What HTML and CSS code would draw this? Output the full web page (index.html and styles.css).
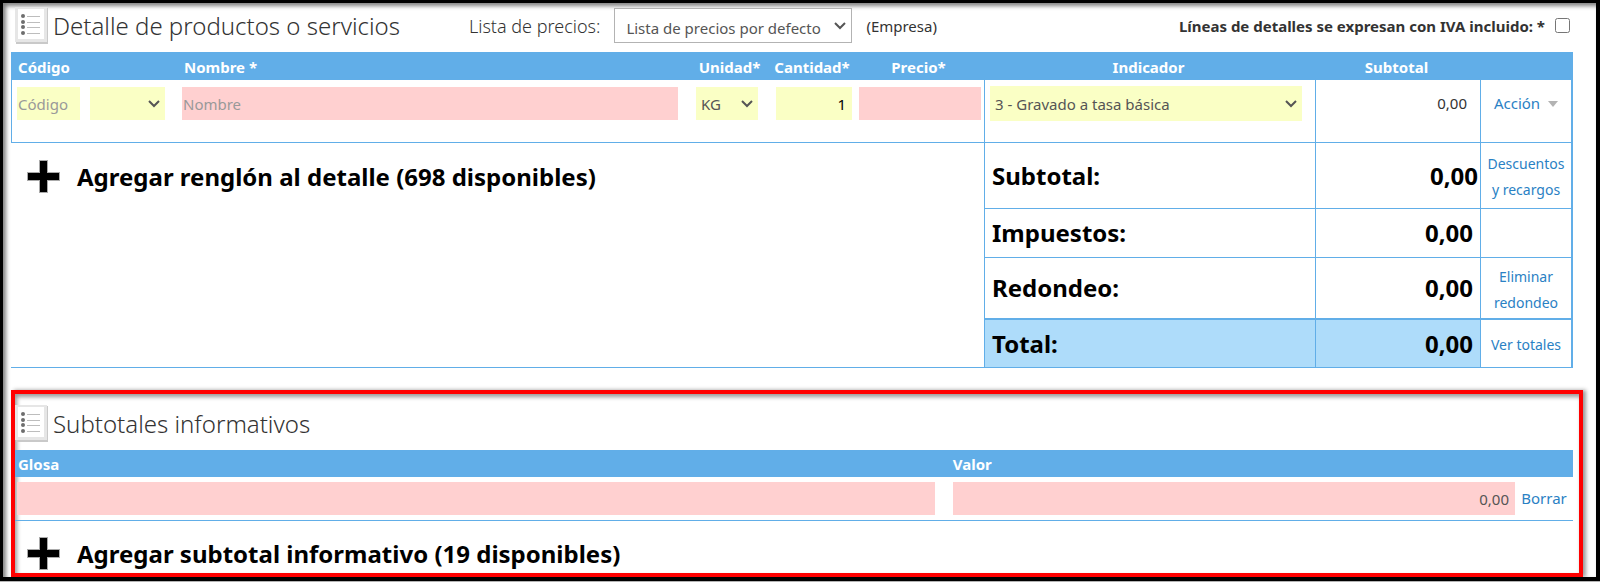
FILE: index.html
```html
<!DOCTYPE html>
<html lang="es">
<head>
    <meta charset="UTF-8">
    <meta name="viewport" content="width=device-width, initial-scale=1.0">
    <title>Detalle de productos o servicios</title>
    <link rel="stylesheet" href="styles.css">
</head>
<body>
    <svg class="sprite" aria-hidden="true">
        <symbol id="icon-list" viewBox="0 0 34 37">
            <rect x="1" y="1" width="32" height="36" fill="#c9c9c9"/>
            <rect x="0" y="0" width="32" height="35" fill="#e6e6e6"/>
            <rect x="3" y="2" width="26" height="30" fill="#fff"/>
            <g fill="#6e6e6e">
                <circle cx="8" cy="9" r="2"/>
                <circle cx="8" cy="15" r="2"/>
                <circle cx="8" cy="20" r="2"/>
                <circle cx="8" cy="26" r="2"/>
            </g>
            <path d="M12 9.500h13M12 15.500h13M12 20.500h13M12 26.500h13" stroke="#bdbdbd"/>
        </symbol>
        <symbol id="icon-plus" viewBox="0 0 33 33">
            <path d="M12 0h9v12h12v9H21v12h-9V21H0v-9h12z" fill="#aaa"/>
            <path d="M13 1h7v12h12v7H20v12h-7V20H1v-7h12z" fill="#000"/>
        </symbol>
    </svg>

    <main class="page">
        <section class="detail">
            <header class="section-header">
                <svg class="icon-list"><use href="#icon-list"/></svg>
                <h1>Detalle de productos o servicios</h1>
                <div class="price-list">
                    <label class="price-label" for="price-list">Lista de precios:</label>
                    <select id="price-list">
                        <option>Lista de precios por defecto</option>
                    </select>
                    <span>(Empresa)</span>
                </div>
                <div class="iva">
                    <label for="iva">Líneas de detalles se expresan con IVA incluido: *</label>
                    <input type="checkbox" id="iva">
                </div>
            </header>

            <table class="detail-table">
                <colgroup>
                    <col class="col-code">
                    <col>
                    <col class="col-unit">
                    <col class="col-qty">
                    <col class="col-price">
                    <col class="col-indicator">
                    <col class="col-subtotal">
                    <col class="col-action">
                </colgroup>
                <thead>
                    <tr>
                        <th class="left">Código</th>
                        <th>Nombre *</th>
                        <th class="center">Unidad*</th>
                        <th class="center">Cantidad*</th>
                        <th class="center">Precio*</th>
                        <th class="center">Indicador</th>
                        <th class="center">Subtotal</th>
                        <th></th>
                    </tr>
                </thead>
                <tbody>
                    <tr class="line">
                        <td class="first">
                            <div class="code-fields">
                                <input class="field optional code" type="text" placeholder="Código" aria-label="Código">
                                <select class="field optional code-type" aria-label="Tipo de código">
                                    <option></option>
                                </select>
                            </div>
                        </td>
                        <td class="name"><input class="field required" type="text" placeholder="Nombre" aria-label="Nombre"></td>
                        <td class="unit">
                            <select class="field optional" aria-label="Unidad">
                                <option>KG</option>
                            </select>
                        </td>
                        <td class="qty"><input class="field optional number" type="text" value="1" aria-label="Cantidad"></td>
                        <td class="price"><input class="field required number" type="text" aria-label="Precio"></td>
                        <td class="cell indicator">
                            <select class="field optional" aria-label="Indicador">
                                <option>3 - Gravado a tasa básica</option>
                            </select>
                        </td>
                        <td class="cell line-total">0,00</td>
                        <td class="cell action"><button class="link-button" type="button">Acción <span class="caret"></span></button></td>
                    </tr>
                    <tr class="total-row tall">
                        <td class="add-cell" colspan="5" rowspan="4">
                            <button class="add-button" type="button">
                                <svg class="icon-plus"><use href="#icon-plus"/></svg>
                                Agregar renglón al detalle (698 disponibles)
                            </button>
                        </td>
                        <td class="cell total-name">Subtotal:</td>
                        <td class="cell total-value wide">0,00</td>
                        <td class="cell total-link"><a href="#">Descuentos y recargos</a></td>
                    </tr>
                    <tr class="total-row">
                        <td class="cell total-name">Impuestos:</td>
                        <td class="cell total-value">0,00</td>
                        <td class="cell total-link"></td>
                    </tr>
                    <tr class="total-row rounding">
                        <td class="cell total-name">Redondeo:</td>
                        <td class="cell total-value">0,00</td>
                        <td class="cell total-link"><a href="#">Eliminar redondeo</a></td>
                    </tr>
                    <tr class="total-row grand">
                        <td class="cell total-name">Total:</td>
                        <td class="cell total-value">0,00</td>
                        <td class="cell total-link"><a href="#">Ver totales</a></td>
                    </tr>
                </tbody>
            </table>
        </section>

        <section class="info">
            <header class="section-header">
                <svg class="icon-list"><use href="#icon-list"/></svg>
                <h2>Subtotales informativos</h2>
            </header>
            <table class="info-table">
                <colgroup>
                    <col class="col-gloss">
                    <col>
                    <col class="col-delete">
                </colgroup>
                <thead>
                    <tr>
                        <th>Glosa</th>
                        <th>Valor</th>
                        <th></th>
                    </tr>
                </thead>
                <tbody>
                    <tr>
                        <td class="gloss"><input class="field required" type="text" aria-label="Glosa"></td>
                        <td class="value"><input class="field required number muted" type="text" value="0,00" aria-label="Valor"></td>
                        <td class="delete"><button class="link-button" type="button">Borrar</button></td>
                    </tr>
                </tbody>
            </table>
            <button class="add-button" type="button">
                <svg class="icon-plus"><use href="#icon-plus"/></svg>
                Agregar subtotal informativo (19 disponibles)
            </button>
        </section>
    </main>
</body>
</html>
```

FILE: styles.css
```css
* {
    box-sizing: border-box;
}
body {
    margin: 0;
    background-color: #b5b5b5;
    font-family: "Segoe UI", "Noto Sans", sans-serif;
    font-size: 15px;
    color: #333;
}
.sprite {
    position: absolute;
    width: 0;
    height: 0;
}
.page {
    border: solid #000;
    border-width: 3px 4px 4px 3px;
    margin-bottom: 1px;
    padding-left: 8px;
    background-color: #fff;
    box-shadow: inset 3px 3px 4px rgba(0, 0, 0, 0.5);
}
.detail {
    padding-right: 23px;
}
.section-header {
    display: flex;
    align-items: center;
    height: 49px;
    padding: 0 0 4px 4px;
}
.icon-list {
    width: 34px;
    height: 37px;
    margin-right: 4px;
}
h1, h2 {
    margin: 0;
    font-size: 24px;
    font-weight: 300;
    line-height: 32px;
}
.price-list {
    display: flex;
    align-items: center;
    gap: 14px;
    margin-left: 69px;
}
.price-label {
    font-size: 18px;
    font-weight: 300;
}
select {
    appearance: none;
    background-image: url("data:image/svg+xml,%3Csvg xmlns='http://www.w3.org/2000/svg' width='12' height='8'%3E%3Cpath d='M1 1l5 5 5-5' fill='none' stroke='%23555' stroke-width='2'/%3E%3C/svg%3E");
    background-repeat: no-repeat;
    background-position: right 5px center;
}
#price-list {
    width: 238px;
    height: 35px;
    padding: 4px 0 0 11px;
    border: 1px solid #b3b3b3;
    border-radius: 0;
    background-color: #fff;
    color: #555;
    font-family: inherit;
    font-size: 15px;
}
.iva {
    display: flex;
    align-items: center;
    gap: 10px;
    margin-left: auto;
    font-weight: 700;
}
.iva input {
    width: 15px;
    height: 15px;
    margin: 0 3px 0 0;
}

/* tables */
table {
    width: 100%;
    table-layout: fixed;
    border-collapse: separate;
    border-spacing: 0;
}
th {
    height: 28px;
    padding: 1px 2px 0;
    background-color: #61aee8;
    color: #fff;
    font-size: 15px;
    font-weight: 700;
    text-align: left;
}
th.left {
    padding-left: 7px;
}
th.center {
    padding: 1px 2px 0 0;
    text-align: center;
}
td {
    padding: 0;
}
.cell {
    border-left: 1px solid #61aee8;
    border-bottom: 1px solid #61aee8;
}
.cell:last-child {
    border-right: 2px solid #61aee8;
}
.col-code {
    width: 171px;
}
.col-unit {
    width: 81px;
}
.col-qty {
    width: 84px;
}
.col-price {
    width: 129px;
}
.col-indicator {
    width: 331px;
}
.col-subtotal {
    width: 165px;
}
.col-action {
    width: 93px;
}

/* fields */
.field {
    display: block;
    width: 100%;
    height: 33px;
    padding: 0 1px;
    border: none;
    border-radius: 0;
    color: #555;
    font-family: inherit;
    font-size: 15px;
}
select.field {
    padding-left: 5px;
}
.field::placeholder {
    color: #999;
}
.optional {
    background-color: #faffc5;
}
.required {
    background-color: #ffd0d0;
}
.number {
    padding-right: 6px;
    color: #000;
    text-align: right;
}
.muted {
    color: #555;
}
.line td {
    height: 63px;
    padding-top: 7px;
    border-bottom: 1px solid #61aee8;
    vertical-align: top;
}
.line .first {
    padding-left: 5px;
    border-left: 1px solid #61aee8;
}
.code-fields {
    display: flex;
    gap: 10px;
}
.code {
    width: 63px;
}
.code-type {
    width: 75px;
}
.line .name {
    padding-right: 12px;
}
.line .unit {
    padding: 7px 13px 0 6px;
}
.line .qty {
    padding: 7px 3px 0 5px;
}
.line .price {
    padding: 7px 3px 0 4px;
}
.line .indicator {
    padding: 6px 13px 0 5px;
}
.indicator .field {
    height: 35px;
}
.line .line-total {
    padding: 7px 13px 0 0;
    line-height: 33px;
    text-align: right;
}
.action {
    text-align: center;
}
.link-button {
    padding: 0;
    border: none;
    background: none;
    color: #2a81c4;
    font-family: inherit;
    font-size: 15px;
    line-height: 33px;
    cursor: pointer;
}
.caret {
    display: inline-block;
    margin-left: 4px;
    border: 5px solid transparent;
    border-top: 6px solid #b3b3b3;
    border-bottom: none;
    vertical-align: 2px;
}

/* totals */
.total-row {
    height: 49px;
}
.tall {
    height: 66px;
}
.rounding {
    height: 62px;
}
.rounding .cell {
    border-bottom-width: 2px;
}
.grand {
    height: 48px;
}
.grand .total-name,
.grand .total-value {
    background-color: #aedcfa;
}
.total-name,
.total-value {
    color: #000;
    font-size: 24px;
    font-weight: 700;
    line-height: 32px;
}
.total-name {
    padding-left: 7px;
}
.total-value {
    padding-right: 7px;
    text-align: right;
}
.total-value.wide {
    padding-right: 2px;
}
.total-link {
    padding: 3px 6px 0;
    font-size: 14px;
    line-height: 26px;
    text-align: center;
}
.total-link a {
    color: #2a81c4;
    text-decoration: none;
}
.add-cell {
    border-bottom: 1px solid #61aee8;
    vertical-align: top;
}
.add-button {
    display: flex;
    align-items: center;
    gap: 17px;
    height: 66px;
    padding: 0 0 0 16px;
    border: none;
    background: none;
    color: #000;
    font-family: inherit;
    font-size: 24px;
    font-weight: 700;
    cursor: pointer;
}
.icon-plus {
    width: 33px;
    height: 33px;
}

/* informative subtotals */
.info {
    margin: 22px 13px 0 0;
    padding-right: 6px;
    border: 4px solid #f00;
    box-shadow: 3px 0 4px rgba(0, 0, 0, 0.4), inset 2px 3px 4px rgba(0, 0, 0, 0.4);
}
.info .section-header {
    height: 56px;
    padding: 3px 0 0;
}
.info .add-button {
    height: 52px;
    padding: 12px 0 0 12px;
}
.info-table th {
    height: 27px;
    padding-left: 3px;
}
.info-table td {
    height: 44px;
    border-bottom: 1px solid #61aee8;
}
.info-table .gloss {
    padding: 0 15px 0 2px;
}
.info-table .value {
    padding-left: 3px;
}
.col-gloss {
    width: 60%;
}
.col-delete {
    width: 58px;
}
.delete {
    text-align: center;
}
```
